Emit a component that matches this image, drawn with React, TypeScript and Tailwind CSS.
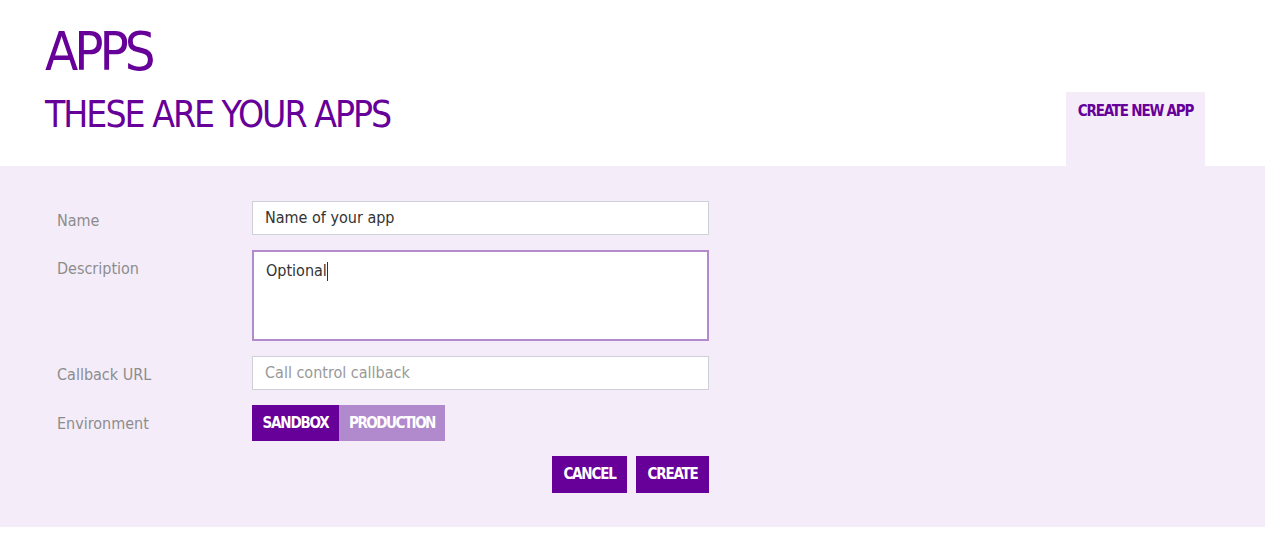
import React from "react";

const font = { fontFamily: '"DejaVu Sans Condensed", "DejaVu Sans", sans-serif' };

export default function App() {
  return (
    <div className="w-[1265px] h-[535px] bg-white" style={font}>
      <div className="h-[166px] flex justify-between pl-[45px] pr-[60px]">
        <div className="pt-[23px]">
          <h1 className="text-[54px] leading-[58px] text-[#660099] tracking-[-4px]">APPS</h1>
          <h2 className="mt-[12px] text-[37px] leading-[44px] text-[#660099] tracking-[-2px]">THESE ARE YOUR APPS</h2>
        </div>
        <div className="self-end w-[139px] h-[74px] bg-[#f5ecfa] pt-[7px] text-center">
          <span className="text-[15px] font-bold text-[#660099] tracking-[-1.2px]">CREATE NEW APP</span>
        </div>
      </div>
      <div className="h-[361px] bg-[#f5ecfa] pt-[35px] pl-[57px]">
        <div className="grid grid-cols-[195px_457px] gap-y-[15px]">
          <label className="text-[16px] text-[#8c8c8c] pt-[8px]">Name</label>
          <div className="h-[34px] bg-white border border-[#d0d0d8] px-[12px] flex items-center text-[16px] text-[#333]">Name of your app</div>
          <label className="text-[16px] text-[#8c8c8c] pt-[7px]">Description</label>
          <div className="h-[91px] bg-white border-2 border-[#b28bcc] px-[12px] pt-[7px] text-[16px] text-[#333]">
            Optional<span className="inline-block w-px h-[19px] bg-[#333] align-middle"></span>
          </div>
          <label className="text-[16px] text-[#8c8c8c] pt-[7px]">Callback URL</label>
          <div className="h-[34px] bg-white border border-[#d0d0d8] px-[12px] flex items-center text-[16px] text-[#999]">Call control callback</div>
          <label className="text-[16px] text-[#8c8c8c] pt-[7px]">Environment</label>
          <div className="flex">
            <div className="h-[36px] w-[87px] bg-[#660099] text-white font-bold text-[15px] flex items-center justify-center tracking-[-1.2px]">SANDBOX</div>
            <div className="h-[36px] w-[106px] bg-[#b08acc] text-white font-bold text-[15px] flex items-center justify-center tracking-[-1.5px]">PRODUCTION</div>
          </div>
          <div></div>
          <div className="flex justify-end gap-[9px]">
            <div className="h-[37px] w-[75px] bg-[#660099] text-white font-bold text-[15px] flex items-center justify-center tracking-[-1.2px]">CANCEL</div>
            <div className="h-[37px] w-[73px] bg-[#660099] text-white font-bold text-[15px] flex items-center justify-center tracking-[-1.2px]">CREATE</div>
          </div>
        </div>
      </div>
    </div>
  );
}
